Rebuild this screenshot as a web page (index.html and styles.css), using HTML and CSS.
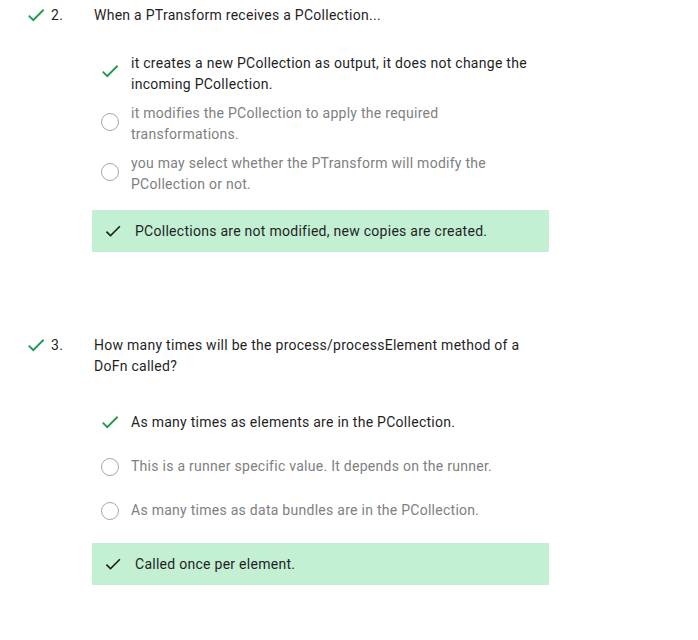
FILE: index.html
```html
<!DOCTYPE html>
<html lang="en">
<head>
<meta charset="utf-8">
<title>Quiz results</title>
<link rel="stylesheet" href="styles.css">
</head>
<body>
<main class="quiz">
  <section class="question">
    <div class="q-head">
      <div class="q-mark">
        <svg class="icon-check green" viewBox="0 0 24 24" width="22" height="22"><path d="M9 16.17L4.83 12l-1.42 1.41L9 19 21 7l-1.41-1.41z"/></svg>
        <span class="q-num">2.</span>
      </div>
      <div class="q-text">When a PTransform receives a PCollection...</div>
    </div>
    <ul class="options">
      <li class="option correct">
        <span class="opt-icon"><svg class="icon-check green" viewBox="0 0 24 24" width="22" height="22"><path d="M9 16.17L4.83 12l-1.42 1.41L9 19 21 7l-1.41-1.41z"/></svg></span>
        <span class="opt-text">it creates a new PCollection as output, it does not change the incoming PCollection.</span>
      </li>
      <li class="option">
        <span class="opt-icon"><span class="radio"></span></span>
        <span class="opt-text">it modifies the PCollection to apply the required transformations.</span>
      </li>
      <li class="option">
        <span class="opt-icon"><span class="radio"></span></span>
        <span class="opt-text">you may select whether the PTransform will modify the PCollection or not.</span>
      </li>
    </ul>
    <div class="feedback">
      <svg class="icon-check dark" viewBox="0 0 24 24" width="20" height="20"><path d="M9 16.17L4.83 12l-1.42 1.41L9 19 21 7l-1.41-1.41z"/></svg>
      <span>PCollections are not modified, new copies are created.</span>
    </div>
  </section>

  <section class="question">
    <div class="q-head">
      <div class="q-mark">
        <svg class="icon-check green" viewBox="0 0 24 24" width="22" height="22"><path d="M9 16.17L4.83 12l-1.42 1.41L9 19 21 7l-1.41-1.41z"/></svg>
        <span class="q-num">3.</span>
      </div>
      <div class="q-text">How many times will be the process/processElement method of a DoFn called?</div>
    </div>
    <ul class="options">
      <li class="option correct">
        <span class="opt-icon"><svg class="icon-check green" viewBox="0 0 24 24" width="22" height="22"><path d="M9 16.17L4.83 12l-1.42 1.41L9 19 21 7l-1.41-1.41z"/></svg></span>
        <span class="opt-text">As many times as elements are in the PCollection.</span>
      </li>
      <li class="option">
        <span class="opt-icon"><span class="radio"></span></span>
        <span class="opt-text">This is a runner specific value. It depends on the runner.</span>
      </li>
      <li class="option">
        <span class="opt-icon"><span class="radio"></span></span>
        <span class="opt-text">As many times as data bundles are in the PCollection.</span>
      </li>
    </ul>
    <div class="feedback">
      <svg class="icon-check dark" viewBox="0 0 24 24" width="20" height="20"><path d="M9 16.17L4.83 12l-1.42 1.41L9 19 21 7l-1.41-1.41z"/></svg>
      <span>Called once per element.</span>
    </div>
  </section>
</main>
</body>
</html>
```

FILE: styles.css
```css
html, body {
  margin: 0;
  padding: 0;
  background: #ffffff;
}

body {
  font-family: Roboto, "Liberation Sans", Arial, sans-serif;
  font-size: 14px;
  line-height: 21px;
  letter-spacing: 0.27px;
  color: #1f1f1f;
}

.quiz {
  padding: 5px 0 0 25px;
}

.question + .question {
  margin-top: 83px;
}

.q-head {
  display: grid;
  grid-template-columns: 69px 455px;
}

.q-mark {
  display: flex;
  align-items: center;
  gap: 4px;
  height: 21px;
}

.q-mark .icon-check {
  flex: none;
  margin-top: -1px;
}

.icon-check {
  display: block;
}

.icon-check.green {
  fill: #1f9a52;
}

.icon-check.dark {
  fill: #1f1f1f;
}

.options {
  list-style: none;
  margin: 27px 0 0 67px;
  padding: 0;
  width: 457px;
  display: flex;
  flex-direction: column;
  gap: 8px;
}

.option {
  display: flex;
  align-items: flex-start;
  color: #808080;
}

.option.correct {
  color: #1f1f1f;
}

.opt-icon {
  flex: none;
  width: 36px;
  height: 36px;
  display: flex;
  align-items: center;
  justify-content: center;
}

.radio {
  width: 18px;
  height: 18px;
  box-sizing: border-box;
  border: 1px solid #a8a8a8;
  border-radius: 50%;
  margin-top: 1px;
}

.opt-text {
  flex: 1;
  min-height: 36px;
  display: flex;
  align-items: center;
  padding-left: 3px;
  padding-right: 12px;
}

.feedback {
  margin: 15px 0 0 67px;
  width: 457px;
  height: 42px;
  box-sizing: border-box;
  padding-left: 11px;
  display: flex;
  align-items: center;
  gap: 12px;
  background: #c3efd3;
  color: #1f1f1f;
}
```
